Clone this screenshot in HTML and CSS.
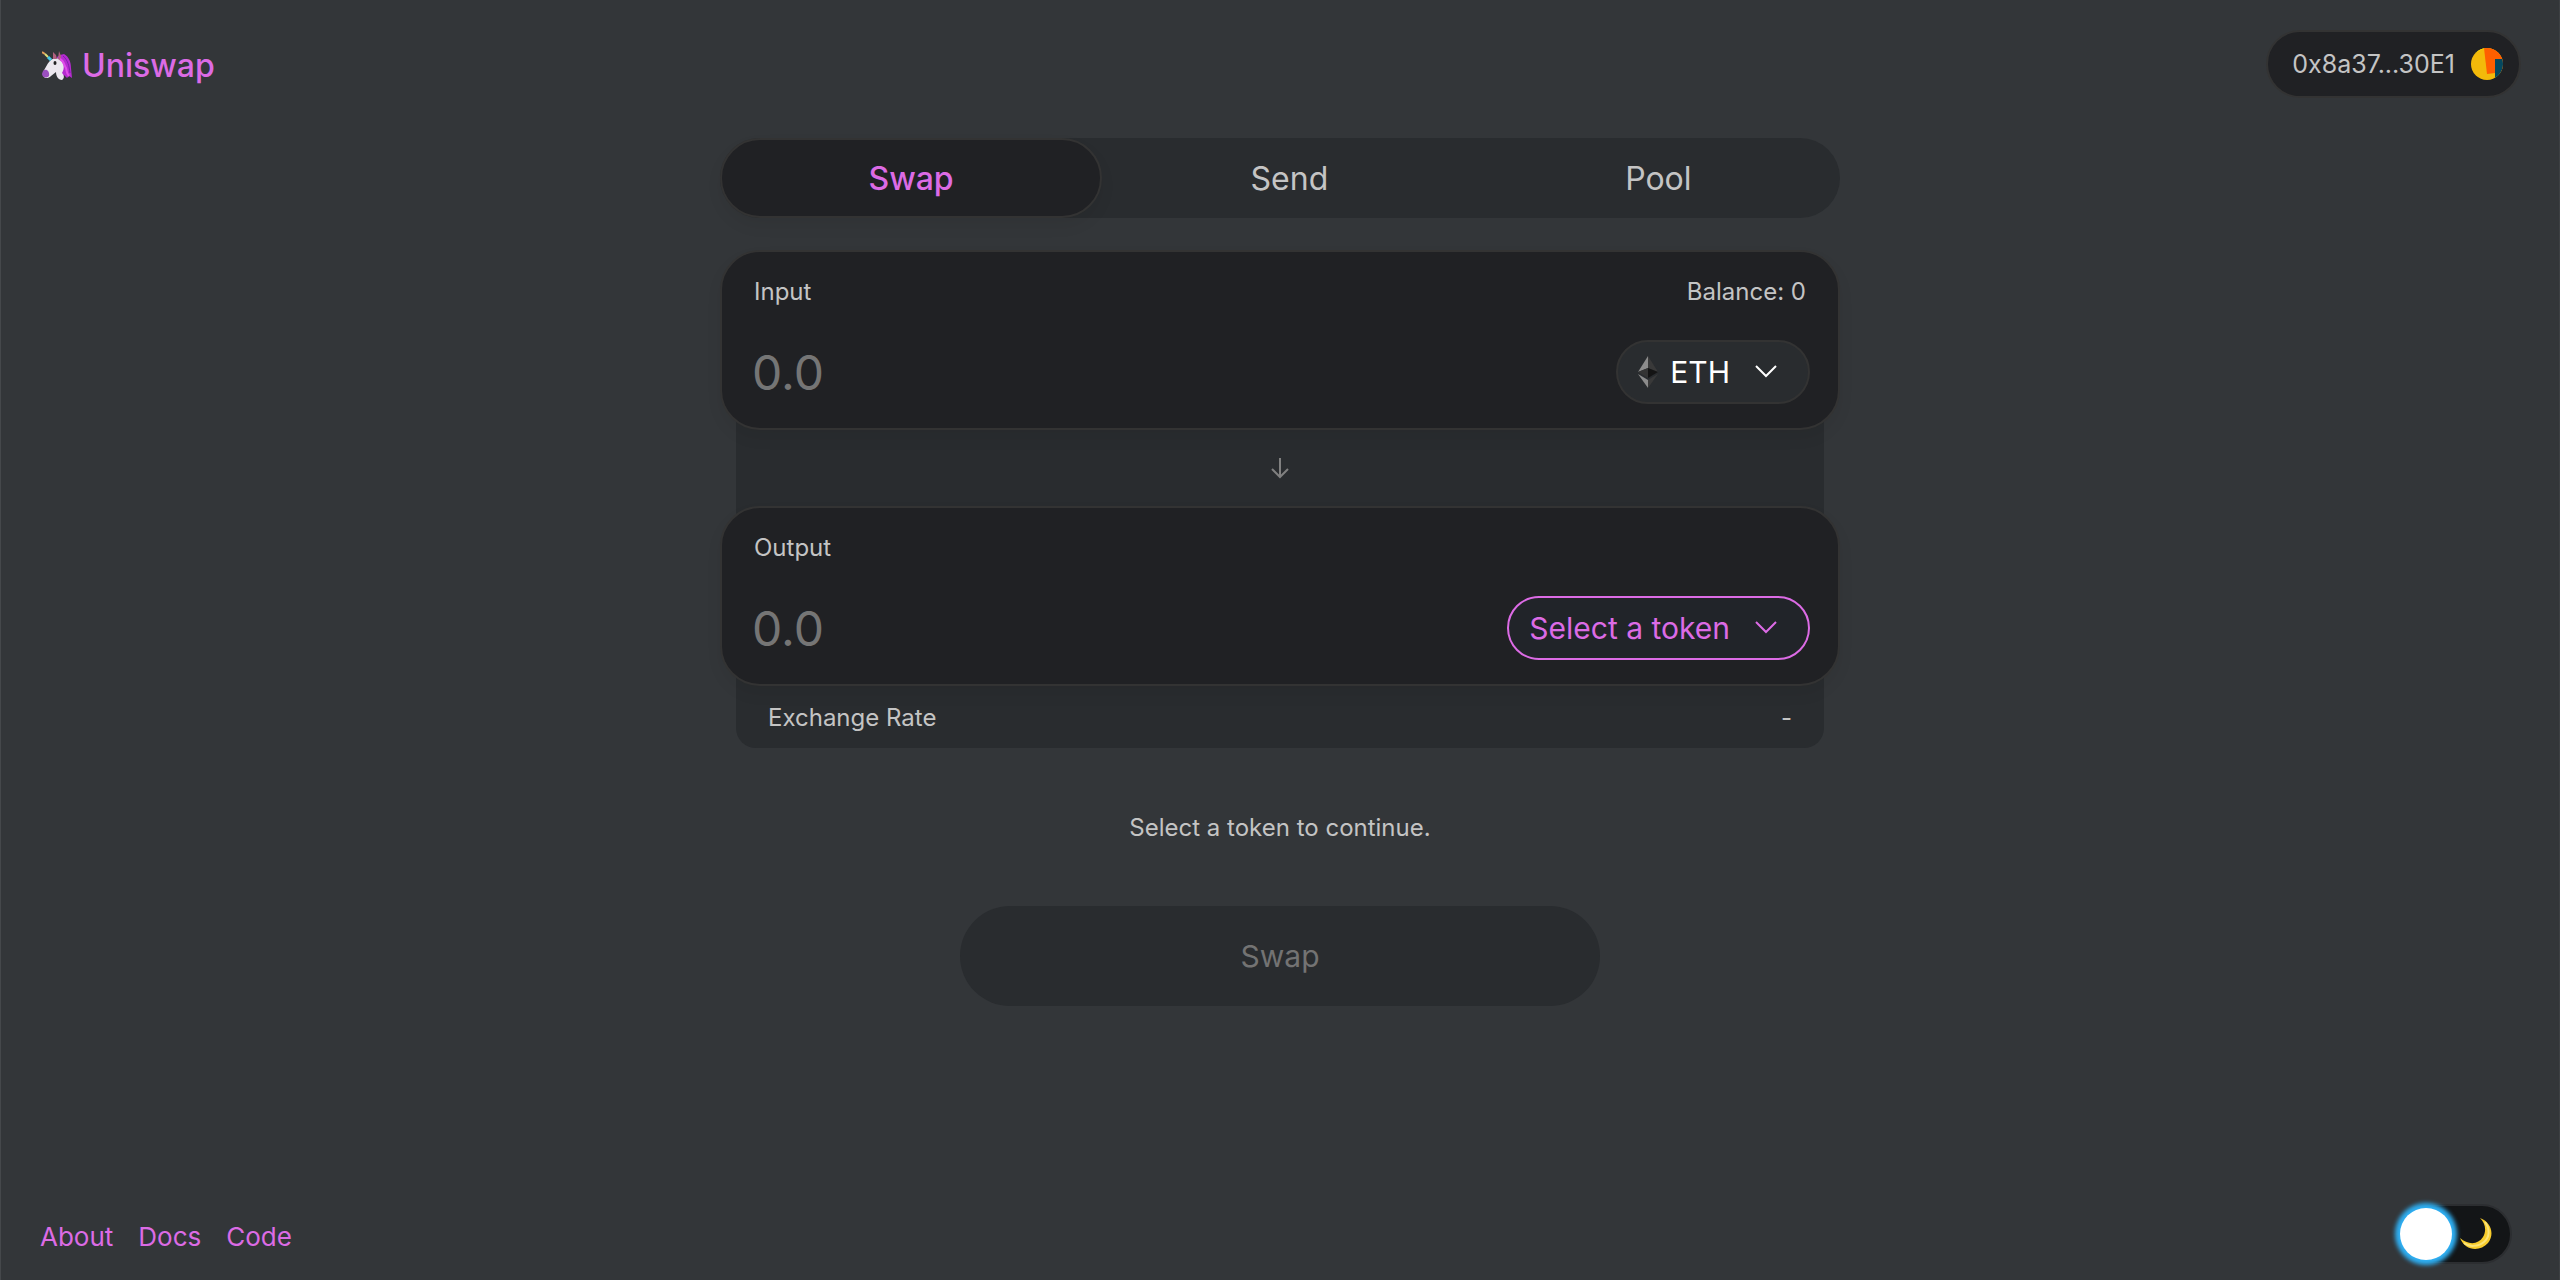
FILE: index.html
```html
<!DOCTYPE html>
<html lang="en">
<head>
  <meta charset="utf-8">
  <title>Uniswap</title>
  <link rel="stylesheet" href="styles.css">
</head>

<body>
  <header class="header">
    <a class="logo" href="#">
      <svg class="logo-icon" viewBox="0 0 30 30" aria-hidden="true">
        <path d="M15 6 L18 4 L22 3 C27 6 29 11 29 17 L30 27 L27 25 L25 27 L22 24 L20 26 L17 18 Z" fill="#b52bd0"/>
        <path d="M5 14 C8 9 12 6 17 8 C22 11 23 17 20 22 C22 24 23 27 20 29 C16 29 14 25 14 21 L9 25 C5 29 0 27 1 21 Z" fill="#ece8ef"/>
        <path d="M1 20 C4 17 8 20 7 25 C4 28 0 26 0 23 Z" fill="#9b4fc0"/>
        <path d="M11 8 L11 1 L14 4 L15 8 Z M16 8 L17 0 L19 5 L19 10 Z" fill="#b0607f"/>
        <path d="M18 8 C22 10 22 14 24 17 C25 20 24 22 27 25" fill="none" stroke="#e04ee8" stroke-width="2"/>
        <path d="M21 5 C26 9 27 15 28 22" fill="none" stroke="#7d1fa8" stroke-width="1"/>
        <path d="M0 1 L3 3" stroke="#e8a05a" stroke-width="2"/>
        <path d="M3 3 L6 6" stroke="#dfe07a" stroke-width="2"/>
        <path d="M6 6 L9 9" stroke="#45c9e8" stroke-width="3"/>
        <ellipse cx="13" cy="12" rx="1.5" ry="2" fill="#222"/>
      </svg>
      <span>Uniswap</span>
    </a>
    <button type="button" class="account">
      <span>0x8a37...30E1</span>
      <svg class="avatar" viewBox="0 0 32 32" aria-hidden="true">
        <clipPath id="avatar-clip"><circle cx="16" cy="16" r="16"/></clipPath>
        <g clip-path="url(#avatar-clip)">
          <rect width="32" height="32" fill="#f3ba0a"/>
          <path d="M0 7 L14 0 L0 0 Z" fill="#f5e404"/>
          <path d="M13 0 H32 V24 L16 26 Z" fill="#ff5f00"/>
          <path d="M24 11 H32 V32 H24 Z" fill="#04485f"/>
        </g>
      </svg>
    </button>
  </header>

  <main class="exchange">
    <nav class="tabs">
      <a class="tab tab-active" href="#swap">Swap</a>
      <a class="tab" href="#send">Send</a>
      <a class="tab" href="#pool">Pool</a>
    </nav>

    <section class="panel">
      <div class="panel-row">
        <label for="input-amount">Input</label>
        <span>Balance: 0</span>
      </div>
      <div class="panel-row">
        <input class="amount" type="text" id="input-amount" placeholder="0.0">
        <button type="button" class="token">
          <svg class="eth-icon" viewBox="0 0 20 32" aria-hidden="true">
            <path d="M10 0 L0 16 L10 12 Z" fill="#8c8c8c"/>
            <path d="M10 0 L20 16 L10 12 Z" fill="#393939"/>
            <path d="M10 12 L0 16 L10 22 Z" fill="#343434"/>
            <path d="M10 12 L20 16 L10 22 Z" fill="#141414"/>
            <path d="M0 18 L10 24 L10 32 Z" fill="#8c8c8c"/>
            <path d="M20 18 L10 24 L10 32 Z" fill="#393939"/>
          </svg>
          <span>ETH</span>
          <svg class="chevron" viewBox="0 0 24 14" aria-hidden="true"><path d="M2 1 L12 11 L22 1"/></svg>
        </button>
      </div>
    </section>

    <div class="between">
      <svg class="arrow" viewBox="0 0 18 22" aria-hidden="true"><path d="M9 1 V20 M1 12 L9 20 L17 12"/></svg>
    </div>

    <section class="panel">
      <div class="panel-row">
        <label for="output-amount">Output</label>
      </div>
      <div class="panel-row">
        <input class="amount" type="text" id="output-amount" placeholder="0.0">
        <button type="button" class="token token-empty">
          <span>Select a token</span>
          <svg class="chevron" viewBox="0 0 24 14" aria-hidden="true"><path d="M2 1 L12 11 L22 1"/></svg>
        </button>
      </div>
    </section>

    <div class="rate">
      <span>Exchange Rate</span>
      <span>-</span>
    </div>

    <p class="message">Select a token to continue.</p>
    <button type="button" class="swap-btn" disabled>Swap</button>
  </main>

  <footer class="footer">
    <nav class="links">
      <a href="#about">About</a>
      <a href="#docs">Docs</a>
      <a href="#code">Code</a>
    </nav>
    <label class="toggle">
      <input type="checkbox" class="toggle-input" aria-label="Dark mode" checked>
      <span class="knob"></span>
      <svg class="moon" viewBox="0 0 32 32" aria-hidden="true">
        <path d="M20 0 C31 4 35 16 28 25 C20 34 5 33 0 20 C8 27 18 27 23 19 C27 12 25 5 20 0 Z" fill="#f8cc2c"/>
        <path d="M25 4 C30 11 30 19 24 24 C18 29 9 29 4 25" fill="none" stroke="#fbe478" stroke-width="2"/>
      </svg>
    </label>
  </footer>
</body>
</html>
```
FILE: styles.css
```css
* {
  box-sizing: border-box;
}

body {
  display: flex;
  flex-direction: column;
  min-height: 100vh;
  margin: 0;
  border-left: 1px solid #45484b;
  border-right: 1px solid #3d4043;
  background-color: #333639;
  color: #c4c4c4;
  font-family: Inter, sans-serif;
  font-size: 24px;
  line-height: 32px;
}

a {
  color: #dc6be5;
  text-decoration: none;
}

button,
input {
  font-family: inherit;
}

button {
  cursor: pointer;
}

.header {
  display: flex;
  justify-content: space-between;
  align-items: center;
  padding: 30px 38px 40px 41px;
}

.logo {
  display: flex;
  align-items: center;
  gap: 10px;
  padding-top: 3px;
  font-size: 32px;
  font-weight: 500;
}

.logo-icon {
  width: 30px;
  height: 30px;
}

.account {
  display: flex;
  align-items: center;
  gap: 16px;
  height: 68px;
  padding: 0 16px 0 24px;
  border: 2px solid #333;
  border-radius: 34px;
  background-color: #202124;
  color: #c4c4c4;
  font-size: 25px;
}

.avatar {
  width: 32px;
  height: 32px;
}

.exchange {
  display: flex;
  flex-direction: column;
  width: 100%;
  max-width: 1120px;
  margin: 0 auto;
}

.tabs {
  display: flex;
  height: 80px;
  margin-bottom: 32px;
  border-radius: 40px;
  background-color: #292c2f;
}

.tab {
  display: flex;
  flex: 1 0 auto;
  justify-content: center;
  align-items: center;
  padding-top: 2px;
  border: 2px solid transparent;
  border-radius: 40px;
  color: #c4c4c4;
  font-size: 32px;
}

.tab-active {
  border-color: #333;
  background-color: #202124;
  box-shadow: 0 8px 16px rgba(0, 0, 0, 0.06);
  color: #dc6be5;
  font-weight: 500;
}

.panel {
  position: relative;
  padding: 24px 28px;
  height: 180px;
  border: 2px solid #333;
  border-radius: 40px;
  background-color: #202124;
  box-shadow: 0 8px 16px rgba(0, 0, 0, 0.06);
}

.panel-row {
  display: flex;
  justify-content: space-between;
  align-items: center;
}

.panel-row:first-child {
  padding: 0 4px;
  margin-bottom: 32px;
}

.amount {
  flex: 1;
  min-width: 0;
  padding: 0 2px;
  border: none;
  outline: none;
  background: none;
  color: #fff;
  font-size: 48px;
}

.amount::placeholder {
  color: #757575;
}

.token {
  display: flex;
  align-items: center;
  height: 64px;
  padding: 0 30px 0 20px;
  border: 2px solid #333;
  border-radius: 32px;
  background-color: #292c2f;
  color: #fff;
  font-size: 30px;
}

.token-empty {
  border-color: #dc6be5;
  background-color: #212429;
  color: #dc6be5;
}

.eth-icon {
  width: 20px;
  height: 32px;
  margin-right: 12px;
}

.chevron {
  width: 24px;
  height: 14px;
  margin-left: 24px;
  fill: none;
  stroke: currentColor;
  stroke-width: 2;
}

.between,
.rate {
  display: flex;
  align-items: center;
  margin: 0 16px;
  background-color: #292c2f;
}

.between {
  justify-content: center;
  height: 156px;
  margin-top: -40px;
  margin-bottom: -40px;
}

.arrow {
  width: 18px;
  height: 22px;
  fill: none;
  stroke: #808080;
  stroke-width: 2;
}

.rate {
  justify-content: space-between;
  margin-top: -40px;
  padding: 56px 32px 14px;
  border-radius: 0 0 20px 20px;
}

.message {
  margin: 64px 0 62px;
  text-align: center;
}

.swap-btn {
  align-self: center;
  width: 640px;
  max-width: 100%;
  height: 100px;
  border: none;
  border-radius: 50px;
  background-color: #292c2f;
  color: #737373;
  font-size: 30px;
}

.footer {
  display: flex;
  justify-content: space-between;
  align-items: center;
  margin-top: auto;
  padding: 0 47px 16px 39px;
}

.links {
  display: flex;
  gap: 25px;
  padding-top: 6px;
  font-size: 26px;
}

.toggle {
  display: flex;
  align-items: center;
  gap: 8px;
  height: 60px;
  padding-right: 18px;
  border: 2px solid #2c2e31;
  border-radius: 30px;
  background-color: #131517;
  cursor: pointer;
}

.toggle-input {
  position: absolute;
  opacity: 0;
}

.knob {
  width: 52px;
  height: 52px;
  border-radius: 50%;
  background-color: #fff;
  box-shadow: 0 0 4px 5px #2fb0f4;
}

.moon {
  width: 32px;
  height: 32px;
}
```
